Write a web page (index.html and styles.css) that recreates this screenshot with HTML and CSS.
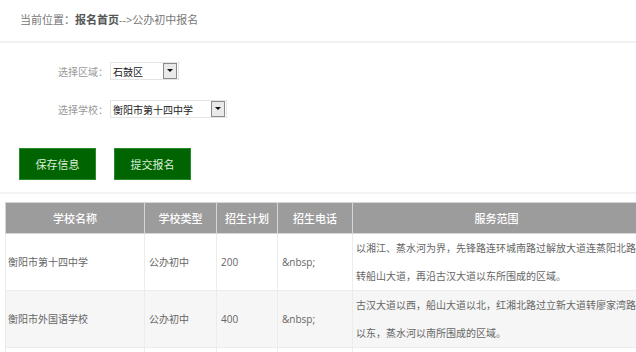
FILE: index.html
```html
<!DOCTYPE html>
<html lang="zh-CN">
<head>
    <meta charset="UTF-8">
    <meta name="viewport" content="width=device-width, initial-scale=1.0">
    <title>公办初中报名</title>
    <link rel="stylesheet" href="styles.css">
</head>
<body>
    <div class="crumb">当前位置：<b>报名首页</b>--&gt;公办初中报名</div>

    <div class="form">
        <div class="form-row">
            <label for="area">选择区域：</label>
            <div class="select-box short">
                <select id="area">
                    <option>石鼓区</option>
                </select>
                <span class="arrow"></span>
            </div>
        </div>

        <div class="form-row">
            <label for="school">选择学校：</label>
            <div class="select-box long">
                <select id="school">
                    <option>衡阳市第十四中学</option>
                </select>
                <span class="arrow"></span>
            </div>
        </div>

        <div class="buttons">
            <button class="btn">保存信息</button>
            <button class="btn">提交报名</button>
        </div>
    </div>

    <table class="school-table">
        <thead>
            <tr>
                <th class="c-name">学校名称</th>
                <th class="c-type">学校类型</th>
                <th class="c-plan">招生计划</th>
                <th class="c-tel">招生电话</th>
                <th class="c-area">服务范围</th>
            </tr>
        </thead>
        <tbody>
            <tr>
                <td>衡阳市第十四中学</td>
                <td>公办初中</td>
                <td>200</td>
                <td>&amp;nbsp;</td>
                <td class="range">以湘江、蒸水河为界，先锋路连环城南路过解放大道连蒸阳北路转船山大道，再沿古汉大道以东所围成的区域。</td>
            </tr>
            <tr>
                <td>衡阳市外国语学校</td>
                <td>公办初中</td>
                <td>400</td>
                <td>&amp;nbsp;</td>
                <td class="range">古汉大道以西，船山大道以北，红湘北路过立新大道转廖家湾路以东，蒸水河以南所围成的区域。</td>
            </tr>
            <tr class="more">
                <td></td>
                <td></td>
                <td></td>
                <td></td>
                <td></td>
            </tr>
        </tbody>
    </table>
</body>
</html>
```

FILE: styles.css
```css
body {
    margin: 0;
    background-color: #fff;
    font-family: "Open Sans", "Noto Sans CJK SC", sans-serif;
    color: #666;
    overflow: hidden;
}

.crumb {
    height: 41px;
    line-height: 40px;
    padding-left: 20px;
    font-size: 11px;
    color: #777;
    border-bottom: 2px solid #f1f1f1;
}

.crumb b {
    color: #555;
}

.form {
    padding-top: 19px;
    border-bottom: 2px solid #f3f3f3;
}

.form-row {
    display: flex;
    align-items: center;
    height: 18px;
    margin-bottom: 20px;
}

.form-row label {
    width: 108px;
    text-align: right;
    font-size: 10px;
    color: #999;
}

.select-box {
    display: flex;
    align-items: center;
    height: 18px;
    margin-left: 2px;
    border: 1px solid #e4e4e4;
    box-sizing: border-box;
    background-color: #fff;
}

.select-box.short {
    width: 69px;
}

.select-box.long {
    width: 117px;
}

.select-box select {
    -webkit-appearance: none;
    appearance: none;
    flex: 1;
    min-width: 0;
    border: none;
    background: transparent;
    padding: 0 0 0 2px;
    font-family: "Noto Sans CJK SC", sans-serif;
    font-size: 10px;
    color: #222;
    outline: none;
}

.select-box .arrow {
    position: relative;
    width: 12px;
    height: 14px;
    margin-right: 1px;
    border: 1px solid #8a8a8a;
    background-color: #e9e9e9;
}

/* small black triangle inside the arrow box */
.select-box .arrow:before {
    content: '';
    position: absolute;
    top: 5px;
    left: 3px;
    border-left: 3px solid transparent;
    border-right: 3px solid transparent;
    border-top: 3px solid #111;
}

.buttons {
    display: flex;
    gap: 18px;
    padding: 10px 0 12px 19px;
}

.btn {
    width: 77px;
    height: 32px;
    background-color: #006500;
    border: 1px solid #2a8a2a;
    color: #dcefdc;
    font-family: "Noto Sans CJK SC", sans-serif;
    font-size: 11px;
    cursor: pointer;
}

.school-table {
    width: 636px;
    margin: 8px 0 0 5px;
    border-collapse: collapse;
    table-layout: fixed;
    font-size: 10px;
}

.school-table th {
    height: 30px;
    background-color: #9c9c9c;
    color: #fff;
    font-family: "Noto Sans CJK SC", sans-serif;
    font-size: 11px;
    font-weight: 500;
    border: 1px solid #d6d6d6;
    padding: 0;
}

.c-name { width: 138px; }
.c-type { width: 71px; }
.c-plan { width: 60px; }
.c-tel { width: 74px; }

.school-table td {
    height: 56px;
    padding: 0 4px;
    border: 1px solid #ececec;
    color: #666;
    line-height: 28px;
    vertical-align: middle;
}

.school-table td:first-child {
    padding-left: 2px;
}

.school-table tbody tr:nth-child(even) td {
    background-color: #f6f6f6;
}

.school-table td.range {
    padding: 0 2px 0 3px;
}
```
